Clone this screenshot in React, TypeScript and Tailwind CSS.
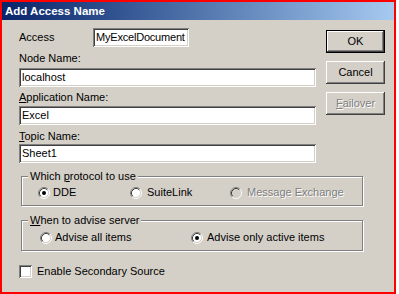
import React from "react";

const sunken =
  "bg-white shadow-[inset_1px_1px_0_#808080,inset_-1px_-1px_0_#ffffff,inset_2px_2px_0_#404040,inset_-2px_-2px_0_#d4d0c8]";
const raised =
  "shadow-[inset_-1px_-1px_0_#404040,inset_1px_1px_0_#ffffff,inset_-2px_-2px_0_#808080,inset_2px_2px_0_#d4d0c8]";
const etched = "border border-[#808080] shadow-[inset_1px_1px_0_#ffffff,1px_1px_0_#ffffff]";

function Radio({ checked = false, disabled = false }: { checked?: boolean; disabled?: boolean }) {
  return (
    <svg width="12" height="12" viewBox="0 0 12 12" className="shrink-0">
      <circle cx="6" cy="6" r="4.5" fill={disabled ? "#d4d0c8" : "#ffffff"} />
      <path d="M2.11 9.89 A5.5 5.5 0 0 1 9.89 2.11" stroke="#808080" fill="none" />
      <path d="M9.89 2.11 A5.5 5.5 0 0 1 2.11 9.89" stroke="#ffffff" fill="none" />
      <path d="M2.82 9.18 A4.5 4.5 0 0 1 9.18 2.82" stroke="#404040" fill="none" />
      <path d="M9.18 2.82 A4.5 4.5 0 0 1 2.82 9.18" stroke="#d4d0c8" fill="none" />
      {checked && <circle cx="6" cy="6" r="2" fill="#000000" />}
    </svg>
  );
}

function TextBox({ value, className = "" }: { value: string; className?: string }) {
  return (
    <div className={`${sunken} h-[19px] flex items-center leading-[13px] whitespace-nowrap overflow-hidden ${className}`}>
      {value}
    </div>
  );
}

export default function App() {
  return (
    <div className="w-[396px] h-[294px] border-2 border-[#ff0000] bg-[#d4d0c8] font-['Liberation_Sans',Arial,sans-serif] text-[11px] text-black flex flex-col overflow-hidden">
      {/* title bar */}
      <div className="h-[18px] shrink-0 bg-gradient-to-r from-[#0a246a] to-[#a6caf0] flex items-center pl-[3px]">
        <span className="text-white font-bold text-[11.5px] leading-[14px]">Add Access Name</span>
      </div>

      {/* fields + buttons */}
      <div className="flex pl-[17px] pt-[8px]">
        <div className="w-[297px] flex flex-col">
          <div className="flex items-center h-[19px]">
            <span className="w-[74px] leading-[13px]">Access</span>
            <TextBox value="MyExcelDocument" className="w-[96px] pl-[3px] tracking-[-0.2px]" />
          </div>
          <span className="mt-[5px] leading-[13px]">Node Name:</span>
          <TextBox value="localhost" className="mt-[3px] pl-[3px]" />
          <span className="mt-[4px] leading-[13px]">
            <u>A</u>pplication Name:
          </span>
          <TextBox value="Excel" className="mt-[2px] pl-[3px]" />
          <span className="mt-[5px] leading-[13px]">
            <u>T</u>opic Name:
          </span>
          <TextBox value="Sheet1" className="mt-[1px] pl-[3px]" />
        </div>

        <div className="ml-[10px] mt-[2px] w-[59px] flex flex-col gap-[8px]">
          <div className="border border-black">
            <div className={`${raised} h-[21px] flex items-center justify-center`}>OK</div>
          </div>
          <div className={`${raised} h-[23px] flex items-center justify-center`}>Cancel</div>
          <div
            className={`${raised} h-[23px] flex items-center justify-center text-[#808080] [text-shadow:1px_1px_0_#ffffff]`}
          >
            <span>
              <u>F</u>ailover
            </span>
          </div>
        </div>
      </div>

      {/* protocol group */}
      <div className={`${etched} ml-[19px] mt-[13px] w-[342px] h-[30px] flex flex-col`}>
        <span className="-mt-[7px] ml-[6px] px-[2px] bg-[#d4d0c8] leading-[13px] w-fit">
          Which <u>p</u>rotocol to use
        </span>
        <div className="mt-[3px] h-[13px] flex items-center pl-[16px]">
          <div className="w-[92px] flex items-center gap-[3px]">
            <Radio checked />
            <span className="leading-[13px]">DDE</span>
          </div>
          <div className="w-[100px] flex items-center gap-[5px]">
            <Radio />
            <span className="leading-[13px]">SuiteLink</span>
          </div>
          <div className="flex items-center gap-[5px]">
            <Radio disabled />
            <span className="leading-[13px] text-[#808080] [text-shadow:1px_1px_0_#ffffff]">Message Exchange</span>
          </div>
        </div>
      </div>

      {/* advise group */}
      <div className={`${etched} ml-[19px] mt-[14px] w-[342px] h-[31px] flex flex-col`}>
        <span className="-mt-[7px] ml-[6px] px-[2px] bg-[#d4d0c8] leading-[13px] w-fit">
          <u>W</u>hen to advise server
        </span>
        <div className="mt-[4px] h-[13px] flex items-center pl-[18px]">
          <div className="w-[151px] flex items-center gap-[3px]">
            <Radio />
            <span className="leading-[13px]">Advise all items</span>
          </div>
          <div className="flex items-center gap-[4px]">
            <Radio checked />
            <span className="leading-[13px]">Advise only active items</span>
          </div>
        </div>
      </div>

      {/* secondary source */}
      <div className="ml-[17px] mt-[14px] flex items-center gap-[5px]">
        <div className={`${sunken} w-[13px] h-[13px]`} />
        <span className="leading-[13px]">Enable Secondary Source</span>
      </div>
    </div>
  );
}
